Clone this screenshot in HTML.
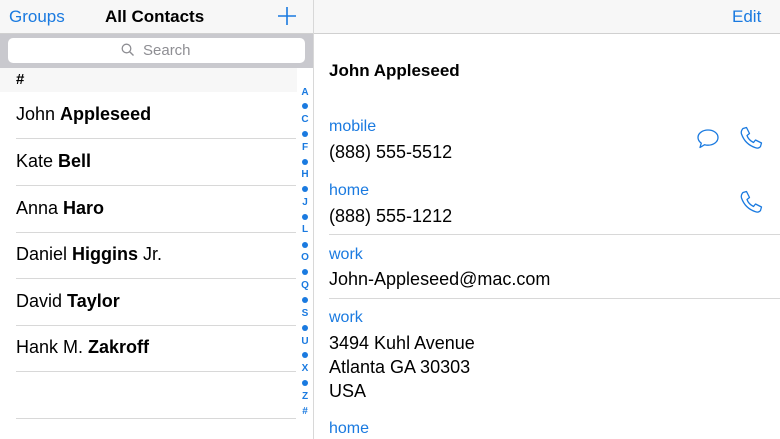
<!DOCTYPE html><html><head><style>
*{margin:0;padding:0;box-sizing:border-box}
body{width:780px;height:439px;overflow:hidden;background:#fff;font-family:"Liberation Sans",Arial,sans-serif;position:relative}
.a{position:absolute}
.blue{color:#1a7ae0}
.row{position:absolute;left:16px;font-size:18px;color:#000}
.sep{position:absolute;left:16px;width:280px;height:1px;background:#d8d8d8}
.idx{position:absolute;left:298px;width:14px;text-align:center;font-size:10px;font-weight:bold;color:#1a7ae0}
.dot{position:absolute;left:302px;width:6px;height:6px;border-radius:50%;background:#1a7ae0}
.lab{position:absolute;left:329px;font-size:16px;color:#1a7ae0}
.val{position:absolute;left:329px;font-size:18px;color:#000;line-height:24px}
.rsep{position:absolute;left:329px;right:0;height:1px;background:#d8d8d8}
</style></head><body>
<div class="a" style="left:0;top:0;width:780px;height:34px;background:#f7f7f7;border-bottom:1px solid #d0d0d0"></div>
<div class="a blue" style="left:9px;top:7px;font-size:17px">Groups</div>
<div class="a" style="left:105px;top:7px;font-size:17px;font-weight:bold">All Contacts</div>
<svg class="a" style="left:277px;top:6px" width="20" height="20" viewBox="0 0 20 20"><path d="M10 1v18M1 10h18" stroke="#1a7ae0" stroke-width="1.6"/></svg>
<div class="a blue" style="left:732px;top:7px;font-size:17px">Edit</div>
<div class="a" style="left:313px;top:0;width:1px;height:439px;background:#d8d8d8"></div>
<div class="a" style="left:0;top:34px;width:313px;height:34px;background:#c9c9ce"></div>
<div class="a" style="left:8px;top:38px;width:297px;height:25px;background:#fff;border-radius:5px"></div>
<svg class="a" style="left:121px;top:43px" width="14" height="14" viewBox="0 0 14 14"><circle cx="5.5" cy="5.5" r="4.3" fill="none" stroke="#8e8e93" stroke-width="1.3"/><path d="M8.7 8.7L12.5 12.5" stroke="#8e8e93" stroke-width="1.4"/></svg>
<div class="a" style="left:143px;top:42px;font-size:15px;color:#8e8e93">Search</div>
<div class="a" style="left:0;top:68px;width:297px;height:24px;background:#f7f7f7"></div>
<div class="a" style="left:16px;top:71px;font-size:15px;font-weight:bold">#</div>
<div class="row" style="top:104px">John <b>Appleseed</b></div><div class="sep" style="top:138px"></div>
<div class="row" style="top:151px">Kate <b>Bell</b></div><div class="sep" style="top:185px"></div>
<div class="row" style="top:198px">Anna <b>Haro</b></div><div class="sep" style="top:232px"></div>
<div class="row" style="top:244px">Daniel <b>Higgins</b> Jr.</div><div class="sep" style="top:278px"></div>
<div class="row" style="top:291px">David <b>Taylor</b></div><div class="sep" style="top:325px"></div>
<div class="row" style="top:337px">Hank M. <b>Zakroff</b></div><div class="sep" style="top:371px"></div>
<div class="sep" style="top:418px"></div>
<div class="idx" style="top:87px">A</div><div class="dot" style="top:103px"></div>
<div class="idx" style="top:114px">C</div><div class="dot" style="top:131px"></div>
<div class="idx" style="top:142px">F</div><div class="dot" style="top:159px"></div>
<div class="idx" style="top:169px">H</div><div class="dot" style="top:186px"></div>
<div class="idx" style="top:197px">J</div><div class="dot" style="top:214px"></div>
<div class="idx" style="top:224px">L</div><div class="dot" style="top:242px"></div>
<div class="idx" style="top:252px">O</div><div class="dot" style="top:269px"></div>
<div class="idx" style="top:280px">Q</div><div class="dot" style="top:297px"></div>
<div class="idx" style="top:308px">S</div><div class="dot" style="top:325px"></div>
<div class="idx" style="top:336px">U</div><div class="dot" style="top:352px"></div>
<div class="idx" style="top:363px">X</div><div class="dot" style="top:380px"></div>
<div class="idx" style="top:391px">Z</div>
<div class="idx" style="top:406px">#</div>
<div class="a" style="left:329px;top:61px;font-size:17px;font-weight:bold">John Appleseed</div>
<div class="lab" style="top:118px">mobile</div><div class="val" style="top:140px">(888) 555-5512</div>
<div class="lab" style="top:182px">home</div><div class="val" style="top:204px">(888) 555-1212</div>
<div class="rsep" style="top:234px"></div>
<div class="lab" style="top:246px">work</div><div class="val" style="top:267px">John-Appleseed@mac.com</div>
<div class="rsep" style="top:298px"></div>
<div class="lab" style="top:309px">work</div><div class="val" style="top:331px">3494 Kuhl Avenue<br>Atlanta GA 30303<br>USA</div>
<div class="lab" style="top:420px">home</div>
<svg class="a" style="left:695px;top:127px" width="26" height="24" viewBox="0 0 26 24"><path d="M13 3C7.5 3 3 6.3 3 10.5c0 2.3 1.3 4.2 3.3 5.6L5 20.5l4.6-2.8c1 .3 2.2.5 3.4.5 5.5 0 10-3.3 10-7.7S18.5 3 13 3z" fill="none" stroke="#1a7ae0" stroke-width="1.3" stroke-linejoin="round"/></svg>
<svg class="a" style="left:737px;top:125px" width="28" height="28" viewBox="0 0 28 28"><path d="M6 3.5l3.5-1 3 6-2.5 2c1 3 3.5 5.5 6.5 7l2-2.5 6 3-1 3.5c-1 1.5-3 2-5 1.2C11.5 20.5 7 16 4.5 9c-.7-2 .2-4.3 1.5-5.5z" fill="none" stroke="#1a7ae0" stroke-width="1.3" stroke-linejoin="round"/></svg>
<svg class="a" style="left:737px;top:189px" width="28" height="28" viewBox="0 0 28 28"><path d="M6 3.5l3.5-1 3 6-2.5 2c1 3 3.5 5.5 6.5 7l2-2.5 6 3-1 3.5c-1 1.5-3 2-5 1.2C11.5 20.5 7 16 4.5 9c-.7-2 .2-4.3 1.5-5.5z" fill="none" stroke="#1a7ae0" stroke-width="1.3" stroke-linejoin="round"/></svg>
</body></html>
